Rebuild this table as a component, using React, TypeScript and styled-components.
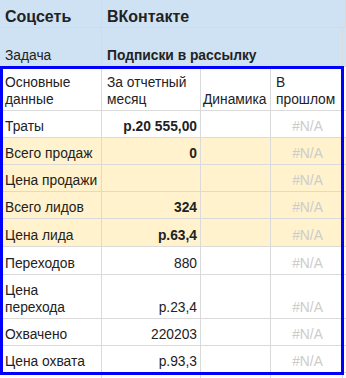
import * as React from 'react'
import styled, { createGlobalStyle } from 'styled-components'

const GlobalStyle = createGlobalStyle`
  html, body {
    margin: 0;
    padding: 0;
    background: #ffffff;
  }
  body {
    font-family: "Liberation Sans", Arial, sans-serif;
    color: #222222;
  }
`

const HEADER_BG = '#cfe2f3'
const HIGHLIGHT_BG = '#fff2cc'
const GRID = '#dadada'

type Align = 'left' | 'right' | 'center'

const Sheet = styled.div`
  position: relative;
  width: 346px;
  height: 378px;
  overflow: hidden;
  display: grid;
  grid-template-columns: 102px 99px 70px 72px 3px;
  grid-template-rows: 28px 39px 44px 27px 27px 27px 27px 28px 28px 44px 27px 27px 20px;
`

const Cell = styled.div<{
  $bg?: string
  $align?: Align
  $bold?: boolean
  $muted?: boolean
  $big?: boolean
  $tight?: boolean
  $span?: number
}>`
  box-sizing: border-box;
  display: flex;
  align-items: flex-end;
  justify-content: ${p =>
    p.$align === 'right' ? 'flex-end' : p.$align === 'center' ? 'center' : 'flex-start'};
  text-align: ${p => p.$align || 'left'};
  grid-column: span ${p => p.$span || 1};
  background: ${p => p.$bg || '#ffffff'};
  border-right: 1px solid ${GRID};
  border-bottom: 1px solid ${GRID};
  padding: 0 3px 2px ${p => (p.$tight ? '2px' : '5px')};
  font-size: ${p => (p.$big ? '16px' : '13.8px')};
  line-height: 17px;
  font-weight: ${p => (p.$bold ? 700 : 400)};
  color: ${p => (p.$muted ? '#cccccc' : '#222222')};
  white-space: pre;
  overflow: hidden;
`

const Selection = styled.div`
  position: absolute;
  left: 0;
  top: 66px;
  width: 344px;
  height: 309px;
  box-sizing: border-box;
  border: 3px solid #0000ff;
  pointer-events: none;
`

type Row = {
  label: string
  value: string
  bold?: boolean
  highlight?: boolean
}

const rows: Row[] = [
  { label: 'Траты', value: 'р.20 555,00', bold: true },
  { label: 'Всего продаж', value: '0', bold: true, highlight: true },
  { label: 'Цена продажи', value: '', highlight: true },
  { label: 'Всего лидов', value: '324', bold: true, highlight: true },
  { label: 'Цена лида', value: 'р.63,4', bold: true, highlight: true },
  { label: 'Переходов', value: '880' },
  { label: 'Цена\nперехода', value: 'р.23,4' },
  { label: 'Охвачено', value: '220203' },
  { label: 'Цена охвата', value: 'р.93,3' },
]

const App: React.FC = () => {
  return (
    <>
      <GlobalStyle />
      <Sheet>
        <Cell $bg={HEADER_BG} $bold $big>Соцсеть</Cell>
        <Cell $bg={HEADER_BG} $bold $big $span={4}>ВКонтакте</Cell>

        <Cell $bg={HEADER_BG}>Задача</Cell>
        <Cell $bg={HEADER_BG} $bold $span={3}>Подписки в рассылку</Cell>
        <Cell $bg={HEADER_BG} />

        <Cell>{'Основные\nданные'}</Cell>
        <Cell>{'За отчетный\nмесяц'}</Cell>
        <Cell $tight>Динамика</Cell>
        <Cell>{'В\nпрошлом'}</Cell>
        <Cell />

        {rows.map(row => {
          const bg = row.highlight ? HIGHLIGHT_BG : undefined
          return (
            <React.Fragment key={row.label}>
              <Cell $bg={bg}>{row.label}</Cell>
              <Cell $bg={bg} $align="right" $bold={row.bold}>{row.value}</Cell>
              <Cell $bg={bg} />
              <Cell $bg={bg} $align="center" $muted>#N/A</Cell>
              <Cell $bg={bg} />
            </React.Fragment>
          )
        })}

        <Cell />
        <Cell />
        <Cell />
        <Cell />
        <Cell />
        <Selection />
      </Sheet>
    </>
  )
}

export default App
